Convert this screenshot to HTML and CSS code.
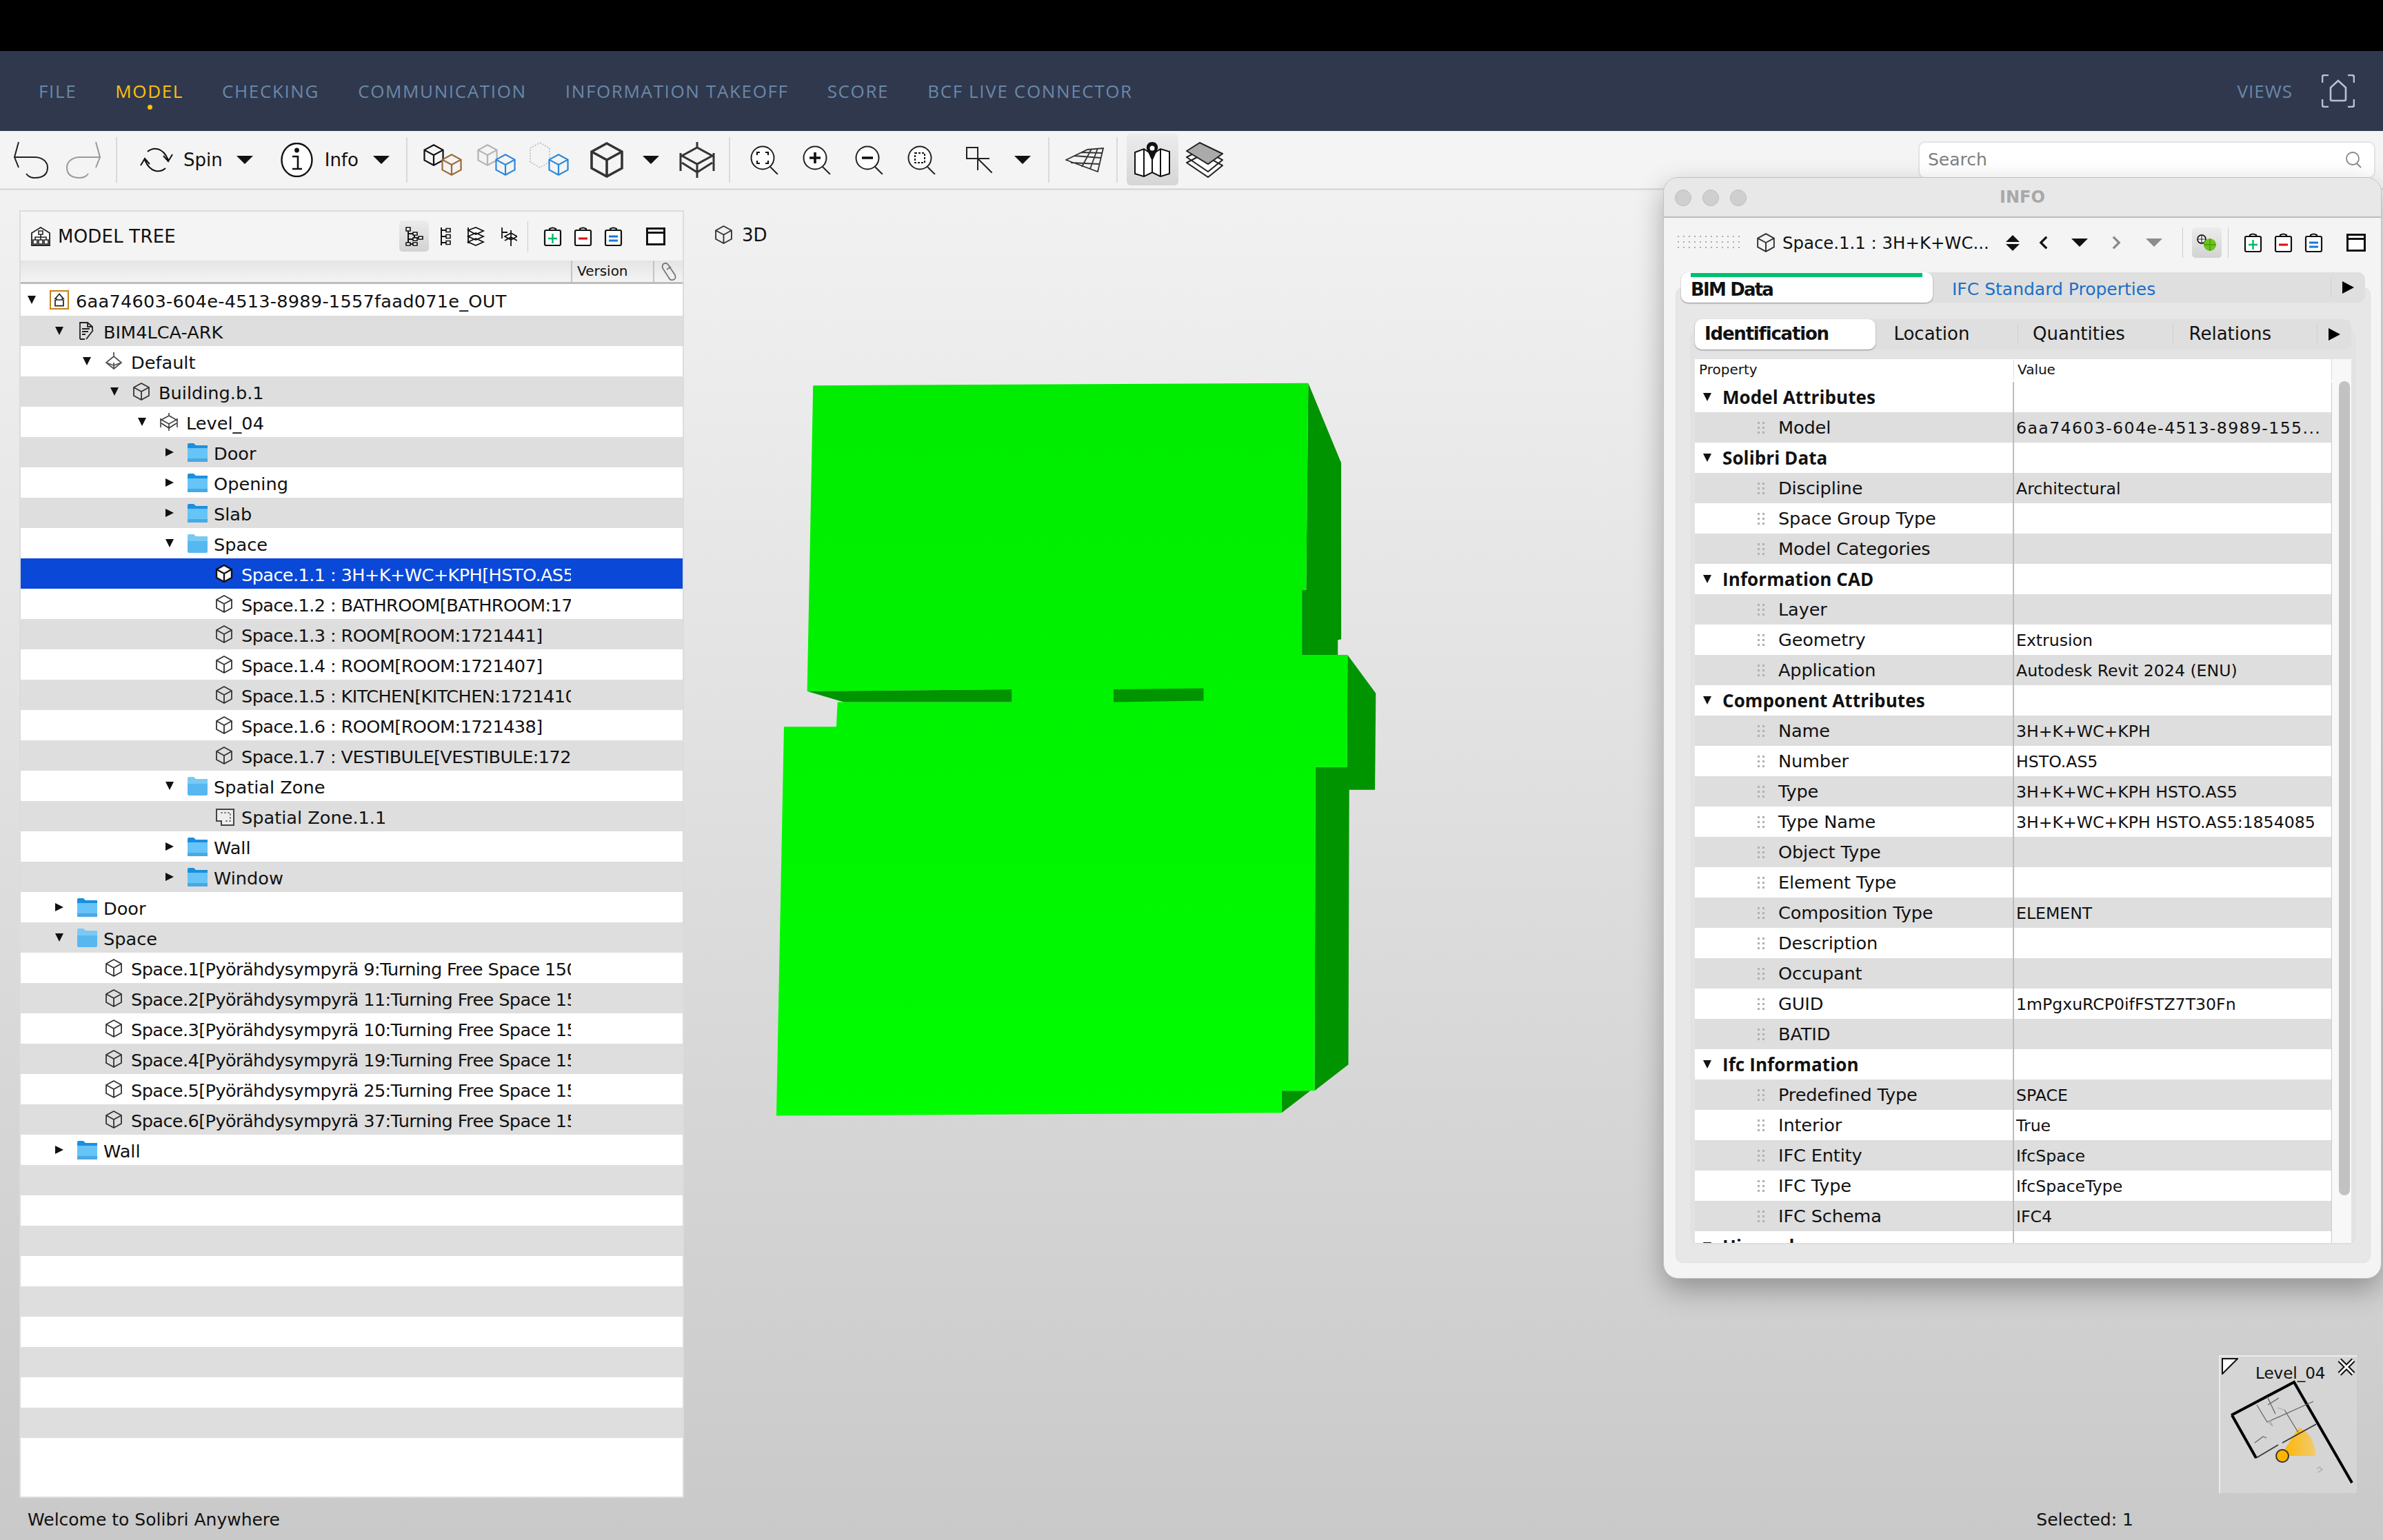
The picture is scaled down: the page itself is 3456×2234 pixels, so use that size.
FILE: index.html
```html
<!DOCTYPE html>
<html lang="en">
<head>
<meta charset="utf-8">
<title>Solibri Anywhere</title>
<link rel="stylesheet" href="styles.css">
</head>
<body>
<svg class="defs" width="0" height="0" aria-hidden="true">
  <symbol id="cube" viewBox="0 0 26 26"><path d="M13 1 24 7V19L13 25 2 19V7ZM2 7 13 13 24 7M13 13V25" fill="none" stroke="currentColor" stroke-width="1.800"/></symbol>
  <symbol id="cubew" viewBox="0 0 26 26"><path d="M13 1 24 7V19L13 25 2 19V7Z" fill="#fff" stroke="#111" stroke-width="2.400"/><path d="M2 7 13 13 24 7M13 13V25" fill="none" stroke="#111" stroke-width="2.400"/></symbol>
  <symbol id="level" viewBox="0 0 26 26"><path d="M13 0V4M13 15V26M1 8V21M25 8V21M13 4 24 10 13 16 2 10ZM2 15 13 22 24 15" fill="none" stroke="currentColor" stroke-width="1.500"/></symbol>
  <symbol id="story" viewBox="0 0 26 26"><path d="M13 0V7M13 6 24 15 13 24 2 15ZM13 15V24M2 15 13 19 24 15" fill="none" stroke="#555" stroke-width="1.800"/></symbol>
  <symbol id="doc" viewBox="0 0 26 26"><path d="M4 25V1H15L22 7V12M15 1V7H22M4 25H11M7 10H18M7 14H16M7 18H12M13 25 23 12" fill="none" stroke="#222" stroke-width="1.800"/></symbol>
  <symbol id="folder" viewBox="0 0 29 27"><path d="M0 2Q0 0 2 0H9L12 3H29V12H0Z" fill="#1b8fdf"/><path d="M0 7H29V25Q29 27 27 27H2Q0 27 0 25Z" fill="#66c4f7"/><path d="M0 22H29V27H0Z" fill="#4aa8e3"/></symbol>
  <symbol id="folderopen" viewBox="0 0 29 27"><path d="M0 2Q0 0 2 0H9L12 3H29V12H0Z" fill="#79c9f5"/><path d="M0 10H29V25Q29 27 27 27H2Q0 27 0 25Z" fill="#57b8f0"/></symbol>
  <symbol id="zone" viewBox="0 0 29 27"><path d="M2 3H27V26H9V20H2Z" fill="#eee" stroke="#444" stroke-width="2"/><path d="M8 8H22V20H14" fill="none" stroke="#888" stroke-width="2" stroke-dasharray="3 2"/></symbol>
  <symbol id="bag" viewBox="0 0 27 28"><path d="M9 5V3Q13.500 0 18 3V5M2 7Q2 5 4 5H23Q25 5 25 7V25Q25 27 23 27H4Q2 27 2 25Z" fill="#fff" stroke="#111" stroke-width="2.200"/></symbol>
  <symbol id="window" viewBox="0 0 28 26"><path d="M1.500 1.500H26.500V24.500H1.500ZM1.500 7.500H26.500" fill="#fff" stroke="#111" stroke-width="3"/></symbol>
  <symbol id="mag" viewBox="0 0 42 42"><circle cx="18" cy="18" r="16.500" fill="#fff" stroke="#222" stroke-width="2"/><path d="M29 31 40 42" stroke="#222" stroke-width="2"/></symbol>
  <symbol id="tree1" viewBox="0 0 28 28"><path d="M5 3V26M5 10H14V16H23M5 18H14M5 25H14" fill="none" stroke="#111" stroke-width="2"/><path d="M2 1H8V6H2ZM12 8H18V12H12ZM20 14H26V18H20ZM12 16H18V20H12ZM12 23H18V27H12ZM2 23H8V27H2Z" fill="#fff" stroke="#111" stroke-width="1.600"/></symbol>
  <symbol id="tree2" viewBox="0 0 17 28"><path d="M3 1V27M3 5H11M3 14H11M3 23H11" fill="none" stroke="#111" stroke-width="2"/><path d="M10 2.500H16V7.500H10ZM10 11.500H16V16.500H10ZM10 20.500H16V25.500H10Z" fill="#fff" stroke="#111" stroke-width="1.600"/></symbol>
  <symbol id="tree3" viewBox="0 0 28 28"><path d="M3 1V24M3 5 14 1 25 6 14 11ZM3 14 14 9 25 14 14 19ZM3 22 14 17 25 22 14 27Z" fill="#fff" stroke="#111" stroke-width="1.800"/></symbol>
  <symbol id="tree4" viewBox="0 0 26 28"><path d="M4 1V17M4 8H12M17 5V28M8 14 17 9 26 14 17 19ZM8 20 17 15 26 20" fill="none" stroke="#111" stroke-width="1.800"/></symbol>
</svg>

<div class="blackbar"></div>

<nav class="nav">
  <a class="nav-item">FILE</a>
  <a class="nav-item active">MODEL</a>
  <a class="nav-item">CHECKING</a>
  <a class="nav-item">COMMUNICATION</a>
  <a class="nav-item">INFORMATION TAKEOFF</a>
  <a class="nav-item">SCORE</a>
  <a class="nav-item">BCF LIVE CONNECTOR</a>
  <span class="nav-views">VIEWS</span>
  <svg class="views-ico" viewBox="0 0 48 48"><path d="M1 12V4Q1 1 4 1H10M38 1H44Q47 1 47 4V12M47 36V44Q47 47 44 47H38M10 47H4Q1 47 1 44V36M13 36V19L24 9 35 19V36Q35 38 33 38H15Q13 38 13 36Z" fill="none" stroke="#b8c2d2" stroke-width="2.6"/></svg>
</nav>

<div class="toolbar">
  <svg class="t50 i20" viewBox="0 0 50 54"><path d="M7 1 1 23 7 38M1 23H30C42 23 49 30 49 38 49 48 42 53 30 53 25 53 21 51 18 47" fill="none" stroke="#222" stroke-width="2"/></svg>
  <svg class="t50 i26" viewBox="0 0 50 54"><path d="M43 1 49 23 43 38M49 23H20C8 23 1 30 1 38 1 48 8 53 20 53 25 53 29 51 32 47" fill="none" stroke="#999" stroke-width="2"/></svg>
  <i class="sep i22"></i>
  <svg class="spin i32" viewBox="0 0 50 40"><path d="M12 8C20 1 34 1 42 20M35 14 42 22 48 12M38 32C30 39 16 39 8 20M15 26 8 18 2 28" fill="none" stroke="#111" stroke-width="2"/></svg>
  <span class="tb-label i14">Spin</span>
  <i class="drop i20"></i>
  <svg class="t47 i40" viewBox="0 0 47 50"><ellipse cx="23.500" cy="25" rx="22" ry="24" fill="#fff" stroke="#111" stroke-width="2.4"/><circle cx="23.500" cy="11" r="3.400" fill="#111"/><path d="M17 20H25V38M17 38H31" fill="none" stroke="#111" stroke-width="2.600"/></svg>
  <span class="tb-label i17">Info</span>
  <i class="drop i21"></i>
  <i class="sep i24"></i>
  <svg class="t58 i22" viewBox="0 0 58 52"><use href="#cube" x="0" y="0" width="32" height="38" class="c-black"/><use href="#cube" x="26" y="14" width="32" height="38" class="c-brown"/></svg>
  <svg class="t58 i20" viewBox="0 0 58 52"><use href="#cube" x="0" y="0" width="32" height="38" class="c-grey"/><use href="#cube" x="26" y="14" width="32" height="38" class="c-blue"/></svg>
  <svg class="t58 i19" viewBox="0 0 58 52"><path d="M15 1 29 9V29L15 37 1 29V9Z" fill="none" stroke="#bbb" stroke-width="1.600" stroke-dasharray="2 2"/><use href="#cube" x="26" y="14" width="32" height="38" class="c-blue"/></svg>
  <svg class="t52 i28" viewBox="0 0 26 26"><use href="#cube" class="c-dark"/></svg>
  <i class="drop i26"></i>
  <svg class="t52 i29" viewBox="0 0 26 26"><use href="#level" class="c-dark"/></svg>
  <i class="sep i20"></i>
  <svg class="t42 i29" viewBox="0 0 42 42"><use href="#mag"/><path d="M10 14V10H14M22 10H26V14M26 22V26H22M14 26H10V22" fill="none" stroke="#111" stroke-width="2.200"/></svg>
  <svg class="t42 i34" viewBox="0 0 42 42"><use href="#mag"/><path d="M10 18H26M18 10V26" stroke="#111" stroke-width="3.600"/></svg>
  <svg class="t42 i34" viewBox="0 0 42 42"><use href="#mag"/><path d="M10 18H26" stroke="#111" stroke-width="3.600"/></svg>
  <svg class="t42 i34" viewBox="0 0 42 42"><use href="#mag"/><path d="M11 11H25V25H11Z" fill="none" stroke="#111" stroke-width="2" stroke-dasharray="3 2"/></svg>
  <svg class="t38 i43" viewBox="0 0 38 38"><path d="M1 1H17V17H1ZM1 17H34M17 17V34M17 17 38 38" fill="none" stroke="#222" stroke-width="2"/></svg>
  <i class="drop i32m"></i>
  <i class="sep i25"></i>
  <svg class="t56 i23" viewBox="0 0 56 36"><path d="M1 18 32 3 55 1 47 35ZM13 12 52 15M23 7 54 8M8 22 50 24M24 28 38 2M36 31 47 1" fill="none" stroke="#333" stroke-width="1.800"/></svg>
  <i class="sep i18"></i>
  <span class="tb-toggle i13"><svg class="mapi" viewBox="0 0 52 52"><path d="M1 15 14 10 26 18 38 10 51 14V46L38 50 26 44 14 50 1 46Z" fill="#fff" stroke="#111" stroke-width="2"/><path d="M14 10V50M38 10V50M26 26V44" stroke="#111" stroke-width="2"/><path d="M26 0C20 0 17 5 18 10L26 28 34 10C35 5 32 0 26 0Z" fill="#111"/><circle cx="26" cy="9" r="3.500" fill="#fff"/></svg></span>
  <svg class="t54 i11" viewBox="0 0 54 52"><path d="M1 30 24 18 53 34 32 51ZM1 22 24 10 53 26 32 43Z" fill="#fff" stroke="#222" stroke-width="2"/><path d="M1 13 20 1 53 17 32 32Z" fill="#aaa" stroke="#222" stroke-width="2"/></svg>
  <div class="search"><span>Search</span><svg class="search-ico" viewBox="0 0 24 24"><circle cx="11" cy="10" r="9" fill="none" stroke="#888" stroke-width="1.800"/><path d="M17 17 23 23" stroke="#888" stroke-width="1.800"/></svg></div>
</div>

<main class="work">
  <section class="tree-panel">
    <header class="panel-head">
      <svg class="tag-ico" viewBox="0 0 28 28"><path d="M14 1 27 9V27H1V9Z" fill="#fff" stroke="#222" stroke-width="1.800"/><path d="M14 11V19M6 19V15H22V19" fill="none" stroke="#222" stroke-width="1.600"/><path d="M11 6H17V11H11ZM3 19H9V25H3ZM11 19H17V25H11ZM19 19H25V25H19Z" fill="#fff" stroke="#222" stroke-width="1.600"/></svg>
      <h1 class="panel-title">MODEL TREE</h1>
      <span class="icon-btn on"><svg class="w28" viewBox="0 0 28 28"><use href="#tree1"/></svg></span>
      <svg class="w17 m15" viewBox="0 0 17 28"><use href="#tree2"/></svg>
      <svg class="w28 m22" viewBox="0 0 28 28"><use href="#tree3"/></svg>
      <svg class="w26 m20" viewBox="0 0 26 28"><use href="#tree4"/></svg>
      <i class="vsep"></i>
      <svg class="bag m22" viewBox="0 0 27 28"><use href="#bag"/><path d="M13.500 10V24M7 17H20" stroke="#00b868" stroke-width="2.400"/></svg>
      <svg class="bag m17" viewBox="0 0 27 28"><use href="#bag"/><path d="M7 17H20" stroke="#e8000e" stroke-width="3"/></svg>
      <svg class="bag m17" viewBox="0 0 27 28"><use href="#bag"/><path d="M7 14H20M7 20H20" stroke="#1878d8" stroke-width="3"/></svg>
      <svg class="win m34" viewBox="0 0 28 26"><use href="#window"/></svg>
    </header>
    <div class="col-head"><span class="col-main"></span><span class="col-version">Version</span><span class="col-link"><svg viewBox="0 0 24 28"><path d="M4 3Q8 0 11 4L21 19Q23 25 18 26 14 27 12 23L3 9Q2 5 4 3ZM9 11 15 7" fill="none" stroke="#777" stroke-width="1.800"/></svg></span></div>
    <div class="rows">
      <div class="row l0"><i class="tw down"></i><svg class="root-ico" viewBox="0 0 28 28"><path d="M14 4 21 12H19V14H9V12H7ZM7 14V24H21V14" fill="#fff" stroke="#222" stroke-width="2"/></svg><span class="name root">6aa74603-604e-4513-8989-1557faad071e_OUT</span></div>
      <div class="row l1"><i class="tw down"></i><svg class="ti" viewBox="0 0 29 27"><use href="#doc" width="26" height="26"/></svg><span class="name">BIM4LCA-ARK</span></div>
      <div class="row l2"><i class="tw down"></i><svg class="ti" viewBox="0 0 29 27"><use href="#story" width="26" height="26"/></svg><span class="name">Default</span></div>
      <div class="row l3"><i class="tw down"></i><svg class="ti" viewBox="0 0 29 27"><use href="#cube" width="26" height="26" class="c-dark"/></svg><span class="name">Building.b.1</span></div>
      <div class="row l4"><i class="tw down"></i><svg class="ti" viewBox="0 0 29 27"><use href="#level" width="26" height="26" class="c-dark"/></svg><span class="name">Level_04</span></div>
      <div class="row l5"><i class="tw right"></i><svg class="ti" viewBox="0 0 29 27"><use href="#folder"/></svg><span class="name">Door</span></div>
      <div class="row l5"><i class="tw right"></i><svg class="ti" viewBox="0 0 29 27"><use href="#folder"/></svg><span class="name">Opening</span></div>
      <div class="row l5"><i class="tw right"></i><svg class="ti" viewBox="0 0 29 27"><use href="#folder"/></svg><span class="name">Slab</span></div>
      <div class="row l5"><i class="tw down"></i><svg class="ti" viewBox="0 0 29 27"><use href="#folderopen"/></svg><span class="name">Space</span></div>
      <div class="row l6 selected"><i class="tw"></i><svg class="ti" viewBox="0 0 29 27"><use href="#cubew" width="26" height="26"/></svg><span class="name leaf">Space.1.1 : 3H+K+WC+KPH[HSTO.AS5:1854085]</span></div>
      <div class="row l6"><i class="tw"></i><svg class="ti" viewBox="0 0 29 27"><use href="#cube" width="26" height="26" class="c-dark"/></svg><span class="name leaf">Space.1.2 : BATHROOM[BATHROOM:1721444]</span></div>
      <div class="row l6"><i class="tw"></i><svg class="ti" viewBox="0 0 29 27"><use href="#cube" width="26" height="26" class="c-dark"/></svg><span class="name leaf">Space.1.3 : ROOM[ROOM:1721441]</span></div>
      <div class="row l6"><i class="tw"></i><svg class="ti" viewBox="0 0 29 27"><use href="#cube" width="26" height="26" class="c-dark"/></svg><span class="name leaf">Space.1.4 : ROOM[ROOM:1721407]</span></div>
      <div class="row l6"><i class="tw"></i><svg class="ti" viewBox="0 0 29 27"><use href="#cube" width="26" height="26" class="c-dark"/></svg><span class="name leaf">Space.1.5 : KITCHEN[KITCHEN:1721410]</span></div>
      <div class="row l6"><i class="tw"></i><svg class="ti" viewBox="0 0 29 27"><use href="#cube" width="26" height="26" class="c-dark"/></svg><span class="name leaf">Space.1.6 : ROOM[ROOM:1721438]</span></div>
      <div class="row l6"><i class="tw"></i><svg class="ti" viewBox="0 0 29 27"><use href="#cube" width="26" height="26" class="c-dark"/></svg><span class="name leaf">Space.1.7 : VESTIBULE[VESTIBULE:1721404]</span></div>
      <div class="row l5"><i class="tw down"></i><svg class="ti" viewBox="0 0 29 27"><use href="#folderopen"/></svg><span class="name">Spatial Zone</span></div>
      <div class="row l6"><i class="tw"></i><svg class="ti" viewBox="0 0 29 27"><use href="#zone"/></svg><span class="name">Spatial Zone.1.1</span></div>
      <div class="row l5"><i class="tw right"></i><svg class="ti" viewBox="0 0 29 27"><use href="#folder"/></svg><span class="name">Wall</span></div>
      <div class="row l5"><i class="tw right"></i><svg class="ti" viewBox="0 0 29 27"><use href="#folder"/></svg><span class="name">Window</span></div>
      <div class="row l1"><i class="tw right"></i><svg class="ti" viewBox="0 0 29 27"><use href="#folder"/></svg><span class="name">Door</span></div>
      <div class="row l1"><i class="tw down"></i><svg class="ti" viewBox="0 0 29 27"><use href="#folderopen"/></svg><span class="name">Space</span></div>
      <div class="row l2"><i class="tw"></i><svg class="ti" viewBox="0 0 29 27"><use href="#cube" width="26" height="26" class="c-dark"/></svg><span class="name leaf">Space.1[Pyörähdysympyrä 9:Turning Free Space 1500]</span></div>
      <div class="row l2"><i class="tw"></i><svg class="ti" viewBox="0 0 29 27"><use href="#cube" width="26" height="26" class="c-dark"/></svg><span class="name leaf">Space.2[Pyörähdysympyrä 11:Turning Free Space 1500]</span></div>
      <div class="row l2"><i class="tw"></i><svg class="ti" viewBox="0 0 29 27"><use href="#cube" width="26" height="26" class="c-dark"/></svg><span class="name leaf">Space.3[Pyörähdysympyrä 10:Turning Free Space 1500]</span></div>
      <div class="row l2"><i class="tw"></i><svg class="ti" viewBox="0 0 29 27"><use href="#cube" width="26" height="26" class="c-dark"/></svg><span class="name leaf">Space.4[Pyörähdysympyrä 19:Turning Free Space 1500]</span></div>
      <div class="row l2"><i class="tw"></i><svg class="ti" viewBox="0 0 29 27"><use href="#cube" width="26" height="26" class="c-dark"/></svg><span class="name leaf">Space.5[Pyörähdysympyrä 25:Turning Free Space 1500]</span></div>
      <div class="row l2"><i class="tw"></i><svg class="ti" viewBox="0 0 29 27"><use href="#cube" width="26" height="26" class="c-dark"/></svg><span class="name leaf">Space.6[Pyörähdysympyrä 37:Turning Free Space 1500]</span></div>
      <div class="row l1"><i class="tw right"></i><svg class="ti" viewBox="0 0 29 27"><use href="#folder"/></svg><span class="name">Wall</span></div>
      <div class="row"></div><div class="row"></div><div class="row"></div><div class="row"></div><div class="row"></div><div class="row"></div><div class="row"></div><div class="row"></div><div class="row"></div>
    </div>
  </section>
  <div class="view-label"><svg class="view-ico" viewBox="0 0 26 26"><use href="#cube" class="c-dark"/></svg><span>3D</span></div>
</main>

<footer class="status"><span>Welcome to Solibri Anywhere</span><span>Selected: 1</span></footer>

<svg class="model" viewBox="0 0 1568 1568" preserveAspectRatio="none">
  <defs><linearGradient id="lit" x1="0" y1="0" x2="0" y2="1"><stop offset="0" stop-color="#00ec00"/><stop offset="1" stop-color="#00fc00"/></linearGradient></defs>
  <path fill="#009400" d="M1335 50 1413 212V570L1405 572V602H1320V470H1330ZM1428 602 1495 680 1493 876H1432L1430 1434 1350 1487 1352 830H1427ZM1272 1487H1340L1272 1532Z"/>
  <path fill="url(#lit)" d="M162 55 1335 50 1330 470H1320V602H1428L1427 830H1352L1350 1487H1272V1532L75 1538 93 748H217L220 698H874V672H1087V698H633V672L148 676Z"/>
  <path fill="#009400" d="M148 676 633 672V698H235ZM874 672 1087 670V695L874 698Z"/>
</svg>

<aside class="minimap">
  <svg class="mini-corner" viewBox="0 0 24 24"><path d="M1 1H23L1 23Z" fill="#fff" stroke="#111" stroke-width="2"/></svg>
  <span class="mini-name">Level_04</span>
  <svg class="mini-close" viewBox="0 0 26 26"><path d="M3 3 23 23M23 3 3 23" stroke="#111" stroke-width="7"/><path d="M3 3 23 23M23 3 3 23" stroke="#fff" stroke-width="3"/></svg>
  <svg class="mini-plan" viewBox="0 0 200 200">
    <defs><linearGradient id="fan" x1="0" x2="1"><stop offset="0" stop-color="#ffb400"/><stop offset="1" stop-color="#f0cc70"/></linearGradient></defs>
    <path d="M95 137 116 105C128 108 142 128 140 146H92Z" fill="url(#fan)"/>
    <path d="M18 87 109 39 193 185M19 87 54 149" fill="none" stroke="#000" stroke-width="4"/>
    <path d="M54 149 86 130M92 127 141 100" fill="none" stroke="#333" stroke-width="1.600"/>
    <path d="M52 127 64 118 69 120M87 62 71 72M137 67 70 97 55 72M95 79 115 112M70 60 82 85" fill="none" stroke="#666" stroke-width="1.300"/>
    <path d="M70 95 78 103 74 94M96 80 85 76M143 170 150 166 146 162 142 165" fill="none" stroke="#aaa" stroke-width="1.300"/>
    <circle cx="92" cy="146" r="9" fill="#ffb400" stroke="#333" stroke-width="2"/>
  </svg>
</aside>

<section class="info">
  <header class="info-title">
    <div class="lights"><i></i><i></i><i></i></div>
    <span>INFO</span>
  </header>
  <div class="info-tools">
    <i class="grip-wide"></i>
    <svg class="iti" viewBox="0 0 26 26"><use href="#cube" class="c-dark"/></svg>
    <span class="info-name">Space.1.1 : 3H+K+WC...</span>
    <span class="updown"><i></i><i></i></span>
    <svg class="chev m27" viewBox="0 0 16 22"><path d="M13 2 4 11 13 20" fill="none" stroke="#111" stroke-width="3.400"/></svg>
    <i class="drop m33"></i>
    <svg class="chev m34" viewBox="0 0 16 22"><path d="M3 2 12 11 3 20" fill="none" stroke="#888" stroke-width="3.400"/></svg>
    <i class="drop grey m35"></i>
    <i class="vsep2 m29"></i>
    <span class="icon-btn on small"><svg class="gear" viewBox="0 0 29 24"><circle cx="7" cy="7" r="6" fill="#fff" stroke="#222" stroke-width="1.800"/><path d="M7 1V13M1 7H13" stroke="#222" stroke-width="1.200"/><circle cx="19" cy="15" r="9" fill="#6cc41c"/><path d="M19 6V24M10 15H28" stroke="#4ea40c" stroke-width="1.800"/></svg></span>
    <i class="vsep2 m9"></i>
    <svg class="bag m22" viewBox="0 0 27 28"><use href="#bag"/><path d="M13.500 10V24M7 17H20" stroke="#00b868" stroke-width="2.400"/></svg>
    <svg class="bag m17" viewBox="0 0 27 28"><use href="#bag"/><path d="M7 17H20" stroke="#e8000e" stroke-width="3"/></svg>
    <svg class="bag m17" viewBox="0 0 27 28"><use href="#bag"/><path d="M7 14H20M7 20H20" stroke="#1878d8" stroke-width="3"/></svg>
    <svg class="win m34" viewBox="0 0 28 26"><use href="#window"/></svg>
  </div>

  <div class="info-body">
    <div class="tabs outer">
      <span class="tab active green">BIM Data</span>
      <span class="tab link">IFC Standard Properties</span>
      <span class="tab-more"><i class="tw-big"></i></span>
    </div>
    <div class="subpanel">
      <div class="tabs inner">
        <span class="tab active">Identification</span>
        <span class="tab plain w-loc">Location</span>
        <span class="tab plain w-qty">Quantities</span>
        <span class="tab plain w-rel">Relations</span>
        <span class="tab-more"><i class="tw-big"></i></span>
      </div>
      <div class="table">
        <div class="table-main">
          <div class="thead"><span>Property</span><span>Value</span></div>
          <div class="tbody">
            <div class="prow group"><span class="pk"><i class="tw down"></i>Model Attributes</span><span class="pv"></span></div>
            <div class="prow"><span class="pk"><i class="grip"></i>Model</span><span class="pv wide">6aa74603-604e-4513-8989-155...</span></div>
            <div class="prow group"><span class="pk"><i class="tw down"></i>Solibri Data</span><span class="pv"></span></div>
            <div class="prow"><span class="pk"><i class="grip"></i>Discipline</span><span class="pv">Architectural</span></div>
            <div class="prow"><span class="pk"><i class="grip"></i>Space Group Type</span><span class="pv"></span></div>
            <div class="prow"><span class="pk"><i class="grip"></i>Model Categories</span><span class="pv"></span></div>
            <div class="prow group"><span class="pk"><i class="tw down"></i>Information CAD</span><span class="pv"></span></div>
            <div class="prow"><span class="pk"><i class="grip"></i>Layer</span><span class="pv"></span></div>
            <div class="prow"><span class="pk"><i class="grip"></i>Geometry</span><span class="pv">Extrusion</span></div>
            <div class="prow"><span class="pk"><i class="grip"></i>Application</span><span class="pv">Autodesk Revit 2024 (ENU)</span></div>
            <div class="prow group"><span class="pk"><i class="tw down"></i>Component Attributes</span><span class="pv"></span></div>
            <div class="prow"><span class="pk"><i class="grip"></i>Name</span><span class="pv">3H+K+WC+KPH</span></div>
            <div class="prow"><span class="pk"><i class="grip"></i>Number</span><span class="pv">HSTO.AS5</span></div>
            <div class="prow"><span class="pk"><i class="grip"></i>Type</span><span class="pv">3H+K+WC+KPH HSTO.AS5</span></div>
            <div class="prow"><span class="pk"><i class="grip"></i>Type Name</span><span class="pv">3H+K+WC+KPH HSTO.AS5:1854085</span></div>
            <div class="prow"><span class="pk"><i class="grip"></i>Object Type</span><span class="pv"></span></div>
            <div class="prow"><span class="pk"><i class="grip"></i>Element Type</span><span class="pv"></span></div>
            <div class="prow"><span class="pk"><i class="grip"></i>Composition Type</span><span class="pv">ELEMENT</span></div>
            <div class="prow"><span class="pk"><i class="grip"></i>Description</span><span class="pv"></span></div>
            <div class="prow"><span class="pk"><i class="grip"></i>Occupant</span><span class="pv"></span></div>
            <div class="prow"><span class="pk"><i class="grip"></i>GUID</span><span class="pv">1mPgxuRCP0ifFSTZ7T30Fn</span></div>
            <div class="prow"><span class="pk"><i class="grip"></i>BATID</span><span class="pv"></span></div>
            <div class="prow group"><span class="pk"><i class="tw down"></i>Ifc Information</span><span class="pv"></span></div>
            <div class="prow"><span class="pk"><i class="grip"></i>Predefined Type</span><span class="pv">SPACE</span></div>
            <div class="prow"><span class="pk"><i class="grip"></i>Interior</span><span class="pv">True</span></div>
            <div class="prow"><span class="pk"><i class="grip"></i>IFC Entity</span><span class="pv">IfcSpace</span></div>
            <div class="prow"><span class="pk"><i class="grip"></i>IFC Type</span><span class="pv">IfcSpaceType</span></div>
            <div class="prow"><span class="pk"><i class="grip"></i>IFC Schema</span><span class="pv">IFC4</span></div>
            <div class="prow group"><span class="pk"><i class="tw down"></i>Hierarchy</span><span class="pv"></span></div>
          </div>
        </div>
        <div class="scrollbar"><i></i></div>
      </div>
    </div>
  </div>
</section>
</body>
</html>
```

FILE: styles.css
```css
* { box-sizing: border-box; }
html, body { margin: 0; padding: 0; }
body {
  position: relative;
  width: 3456px;
  height: 2234px;
  overflow: hidden;
  display: flex;
  flex-direction: column;
  font-family: "DejaVu Sans", sans-serif;
  font-size: 26px;
  color: #111;
  background: linear-gradient(#f1f1f1 0, #f1f1f1 300px, #c9c9c9 100%);
}
i { display: block; flex: none; font-style: normal; }
svg { display: block; flex: none; }
.defs { position: absolute; }
.c-black { color: #111; }
.c-dark { color: #333; }
.c-grey { color: #b4b4b4; }
.c-blue { color: #2c88dc; }
.c-brown { color: #9a6a38; }

.blackbar { height: 74px; background: #000; flex: none; }

.nav {
  flex: none;
  height: 116px;
  background: #30384e;
  display: flex;
  align-items: center;
  gap: 56px;
  padding: 0 41px 0 56px;
  font-family: "Open Sans", sans-serif;
  font-size: 26px;
  letter-spacing: 1.640px;
  color: #6a88a8;
}
.nav-item { position: relative; white-space: nowrap; }
.nav-item.active { color: #ffc107; }
.nav-item.active::after {
  content: "";
  position: absolute;
  left: 50%;
  bottom: -9px;
  width: 7px;
  height: 7px;
  margin-left: -3px;
  border-radius: 50%;
  background: #ffc107;
}
.nav-views { margin-left: auto; letter-spacing: 1px; }
.views-ico { width: 48px; height: 48px; margin-left: -14px; }

.toolbar {
  flex: none;
  height: 86px;
  background: #f4f4f4;
  border-bottom: 3px solid #dcdcdc;
  display: flex;
  align-items: center;
}
.spin { width: 50px; height: 40px; }
.t38 { width: 38px; height: 38px; }
.t42 { width: 42px; height: 42px; }
.t47 { width: 47px; height: 50px; }
.t50 { width: 50px; height: 54px; }
.t52 { width: 52px; height: 52px; }
.t54 { width: 54px; height: 52px; }
.t56 { width: 56px; height: 36px; }
.t58 { width: 58px; height: 52px; }
.mapi { width: 52px; height: 52px; }
.i11 { margin-left: 11px; }
.i13 { margin-left: 13px; }
.i14 { margin-left: 14px; }
.i17 { margin-left: 17px; }
.i18 { margin-left: 18px; }
.i19 { margin-left: 19px; }
.i20 { margin-left: 20px; }
.i21 { margin-left: 21px; }
.i22 { margin-left: 22px; }
.i23 { margin-left: 23px; }
.i24 { margin-left: 24px; }
.i25 { margin-left: 25px; }
.i26 { margin-left: 26px; }
.i28 { margin-left: 28px; }
.i29 { margin-left: 29px; }
.i32 { margin-left: 32px; }
.i32m { margin-left: 32px; }
.i34 { margin-left: 34px; }
.i40 { margin-left: 40px; }
.i43 { margin-left: 43px; }
.sep { width: 2px; height: 66px; background: #dadada; }
.tb-label { font-size: 26px; line-height: 1; }
.drop { width: 0; height: 0; border-left: 12px solid transparent; border-right: 12px solid transparent; border-top: 12px solid #111; }
.drop.grey { border-top-color: #8c8c8c; }
.tb-toggle {
  width: 75px;
  height: 75px;
  display: flex;
  align-items: center;
  justify-content: center;
  border-radius: 6px;
  background: linear-gradient(#ececec, #d6d6d6);
}
.search {
  margin-left: auto;
  margin-right: 11px;
  width: 663px;
  height: 54px;
  border: 2px solid #e3e3e3;
  border-radius: 10px;
  background: #fff;
  display: flex;
  align-items: center;
  justify-content: space-between;
  padding: 0 18px 0 12px;
  font-size: 25px;
  color: #808080;
}
.search-ico { width: 24px; height: 24px; }

.work {
  flex: 1;
  min-height: 0;
  display: flex;
  padding: 29px 0 0 28px;
}
.tree-panel {
  width: 964px;
  height: 1868px;
  border: 2px solid #dcdcdc;
  background: #fff;
  display: flex;
  flex-direction: column;
  overflow: hidden;
}
.panel-head {
  flex: none;
  height: 71px;
  background: #f4f4f4;
  display: flex;
  align-items: center;
  padding-left: 15px;
}
.tag-ico { width: 28px; height: 28px; }
.panel-title { margin: 0 auto 0 11px; font-size: 26px; font-weight: 400; letter-spacing: .2px; }
.icon-btn {
  width: 43px;
  height: 45px;
  display: flex;
  align-items: center;
  justify-content: center;
  border-radius: 5px;
  background: linear-gradient(#ececec, #d2d2d2);
}
.w28 { width: 28px; height: 28px; }
.w17 { width: 17px; height: 28px; }
.w26 { width: 26px; height: 28px; }
.bag { width: 27px; height: 28px; }
.win { width: 28px; height: 26px; }
.m9 { margin-left: 9px; }
.m15 { margin-left: 15px; }
.m17 { margin-left: 17px; }
.m20 { margin-left: 20px; }
.m22 { margin-left: 22px; }
.m27 { margin-left: 27px; }
.m29 { margin-left: 29px; }
.m33 { margin-left: 33px; }
.m34 { margin-left: 34px; }
.m35 { margin-left: 35px; }
.panel-head > svg:last-child { margin-right: 25px; }
.vsep { width: 1px; height: 44px; margin-left: 15px; background: #ccc; }
.vsep2 { width: 1px; height: 44px; background: #ccc; }
.col-head {
  flex: none;
  height: 34px;
  display: flex;
  background: linear-gradient(#e4e4e4, #f4f4f4);
  border-bottom: 3px solid #bdbdbd;
  font-size: 20px;
  line-height: 31px;
}
.col-main { width: 798px; }
.col-version { width: 119px; padding-left: 7px; border-left: 2px solid #c4c4c4; }
.col-link { flex: 1; border-left: 2px solid #c4c4c4; display: flex; align-items: center; justify-content: center; }
.col-link svg { width: 24px; height: 28px; }
.rows { flex: 1; font-size: 25.600px; position: relative; overflow: hidden; }
.row {
  height: 44px;
  width: 798px;
  display: flex;
  align-items: center;
  white-space: nowrap;
  overflow: hidden;
}
.row::before { content: ""; position: absolute; left: 0; right: 0; height: 44px; z-index: 0; }
.row > * { position: relative; z-index: 1; }
.row:nth-child(even)::before { background: #dedede; }
.row.selected::before { background: #0a48d8; }
.row.selected { color: #fff; }
.row:first-child { height: 46px; }
.row.l0 { padding-left: 10px; }
.row.l1 { padding-left: 50px; }
.row.l2 { padding-left: 90px; }
.row.l3 { padding-left: 130px; }
.row.l4 { padding-left: 170px; }
.row.l5 { padding-left: 210px; }
.row.l6 { padding-left: 250px; }
.tw { width: 12px; height: 12px; }
.tw.down { height: 0; border-left: 6px solid transparent; border-right: 6px solid transparent; border-top: 12px solid #111; }
.tw.right { width: 0; height: 0; border-top: 6px solid transparent; border-bottom: 6px solid transparent; border-left: 12px solid #111; }
.ti { width: 29px; height: 27px; margin-left: 20px; }
.root-ico { width: 28px; height: 28px; margin-left: 20px; border: 2px solid #c58018; }
.name { margin-left: 9px; padding-top: 3px; }
.name.root { margin-left: 10px; letter-spacing: .25px; }
.name.leaf { letter-spacing: -.6px; }

.view-label { display: flex; align-items: center; gap: 13px; height: 71px; margin-left: 44px; font-size: 26px; }
.view-ico { width: 27px; height: 27px; }

.status {
  flex: none;
  height: 61px;
  display: flex;
  justify-content: space-between;
  align-items: center;
  padding: 2px 362px 0 40px;
  font-size: 25px;
}

.model { position: absolute; left: 1080px; top: 520px; width: 960px; height: 1120px; }

.minimap {
  position: absolute;
  left: 3218px;
  top: 1966px;
  width: 200px;
  height: 200px;
  background: #d5d5d5;
  border-left: 2px solid #ececec;
  border-top: 2px solid #ececec;
}
.mini-plan { position: absolute; left: -2px; top: -2px; width: 200px; height: 200px; }
.mini-corner { position: absolute; left: 2px; top: 2px; width: 24px; height: 24px; z-index: 1; }
.mini-close { position: absolute; right: 2px; top: 2px; width: 26px; height: 26px; z-index: 1; }
.mini-name { position: absolute; left: 51px; top: 10px; font-size: 23px; line-height: 28px; z-index: 1; }

.info {
  position: absolute;
  left: 2412px;
  top: 257px;
  width: 1042px;
  height: 1598px;
  border: 1px solid #c0c0c0;
  border-radius: 22px;
  background: #f4f4f4;
  box-shadow: 0 16px 40px rgba(0,0,0,.3);
  overflow: hidden;
  display: flex;
  flex-direction: column;
}
.info-title {
  flex: none;
  height: 58px;
  position: relative;
  background: #e8e8e8;
  border-bottom: 2px solid #bcbcbc;
  display: flex;
  align-items: center;
  justify-content: center;
  font-weight: 700;
  font-size: 24px;
  color: #a8a8a8;
}
.lights { position: absolute; left: 16px; top: 17px; display: flex; gap: 16px; }
.lights i { width: 24px; height: 24px; border-radius: 50%; background: #cfcfcf; border: 1px solid #bdbdbd; }
.info-tools {
  flex: none;
  height: 72px;
  display: flex;
  align-items: center;
  padding-left: 17px;
}
.grip-wide {
  width: 96px;
  height: 26px;
  background-image: radial-gradient(#aaa 1px, transparent 1.200px);
  background-size: 8px 8px;
}
.iti { width: 30px; height: 28px; margin-left: 20px; }
.info-name { margin-left: 9px; width: 300px; white-space: nowrap; font-size: 24.400px; }
.updown { margin-left: 24px; display: flex; flex-direction: column; gap: 3px; }
.updown i { width: 0; height: 0; border-left: 10px solid transparent; border-right: 10px solid transparent; }
.updown i:first-child { border-bottom: 10px solid #111; }
.updown i:last-child { border-top: 10px solid #111; }
.chev { width: 15px; height: 22px; }
.icon-btn.small { width: 43px; height: 44px; margin-left: 13px; }
.gear { width: 29px; height: 24px; }

.info-body {
  margin: 29px 15px 0 17px;
  height: 1415px;
  background: #e7e7e7;
  border: 1px solid #e0e0e0;
  border-radius: 10px;
  padding: 0 21px;
}
.tabs {
  display: flex;
  align-items: stretch;
  background: #dfdfdf;
  border-radius: 10px;
  height: 44px;
  font-size: 26px;
  line-height: 42px;
}
.outer { margin: -23px -14px 0; }
.tab { display: block; white-space: nowrap; }
.tab.active {
  background: #fff;
  border-radius: 10px;
  font-weight: 700;
  letter-spacing: -1.200px;
  padding-left: 14px;
  box-shadow: 0 1px 2px rgba(0,0,0,.4);
}
.outer .tab.active { width: 365px; position: relative; letter-spacing: -1.800px; padding-top: 4px; }
.tab.green::before { content: ""; position: absolute; left: 14px; top: 1px; width: 336px; height: 6px; background: #00bf6f; }
.tab.link { color: #1a70c8; margin-left: 28px; font-size: 25px; padding-top: 4px; }
.tab-more { margin-left: auto; width: 50px; border-left: 1px solid #d0d0d0; margin-top: 8px; margin-bottom: 8px; display: flex; align-items: center; justify-content: center; }
.tw-big { width: 0; height: 0; border-top: 9px solid transparent; border-bottom: 9px solid transparent; border-left: 17px solid #000; }
.subpanel {
  margin: 41px 0 0;
  height: 1325px;
  background: #e3e3e3;
  border: 1px solid #dcdcdc;
  border-radius: 10px;
  padding: 0 5px;
}
.inner { margin: -18px 0 0; height: 44px; }
.inner .tab.active { width: 263px; }
.plain { padding-left: 26px; }
.plain + .plain { border-left: 1px solid #cfcfcf; margin: 8px 0; line-height: 26px; }
.w-loc { width: 206px; }
.w-qty { width: 225px; padding-left: 21px; }
.w-rel { width: 210px; padding-left: 23px; }
.table { margin-top: 14px; height: 1282px; display: flex; background: #fff; overflow: hidden; }
.table-main { width: 924px; }
.thead { height: 33px; display: flex; font-size: 20px; line-height: 30px; }
.thead span { width: 463px; padding-left: 6px; border-right: 1px solid #ddd; height: 30px; }
.thead span + span { width: 461px; padding-left: 5px; }
.prow { height: 44px; display: flex; align-items: center; }
.prow:nth-child(even) { background: #dedede; }
.pk { width: 463px; height: 44px; display: flex; align-items: center; padding-left: 89px; font-size: 25.600px; letter-spacing: -.15px; border-right: 2px solid #bdbdbd; white-space: nowrap; }
.group .pk { padding-left: 12px; font-family: "Open Sans", sans-serif; font-weight: 700; font-size: 26px; letter-spacing: .1px; }
.group .tw { margin-right: 16px; }
.pv { flex: 1; padding-left: 3px; font-size: 23.600px; white-space: nowrap; height: 44px; line-height: 46px; border-right: 1px solid #ccc; }
.pv.wide { letter-spacing: 1.400px; }
.grip { width: 12px; height: 20px; margin-right: 20px; background-image: radial-gradient(#b0b0b0 1.600px, transparent 2px); background-size: 7px 7px; }
.scrollbar { flex: 1; background: #f8f8f8; padding: 32px 6px 0 10px; }
.scrollbar i { width: 16px; height: 1181px; border-radius: 8px; background: #c2c2c2; }
```
